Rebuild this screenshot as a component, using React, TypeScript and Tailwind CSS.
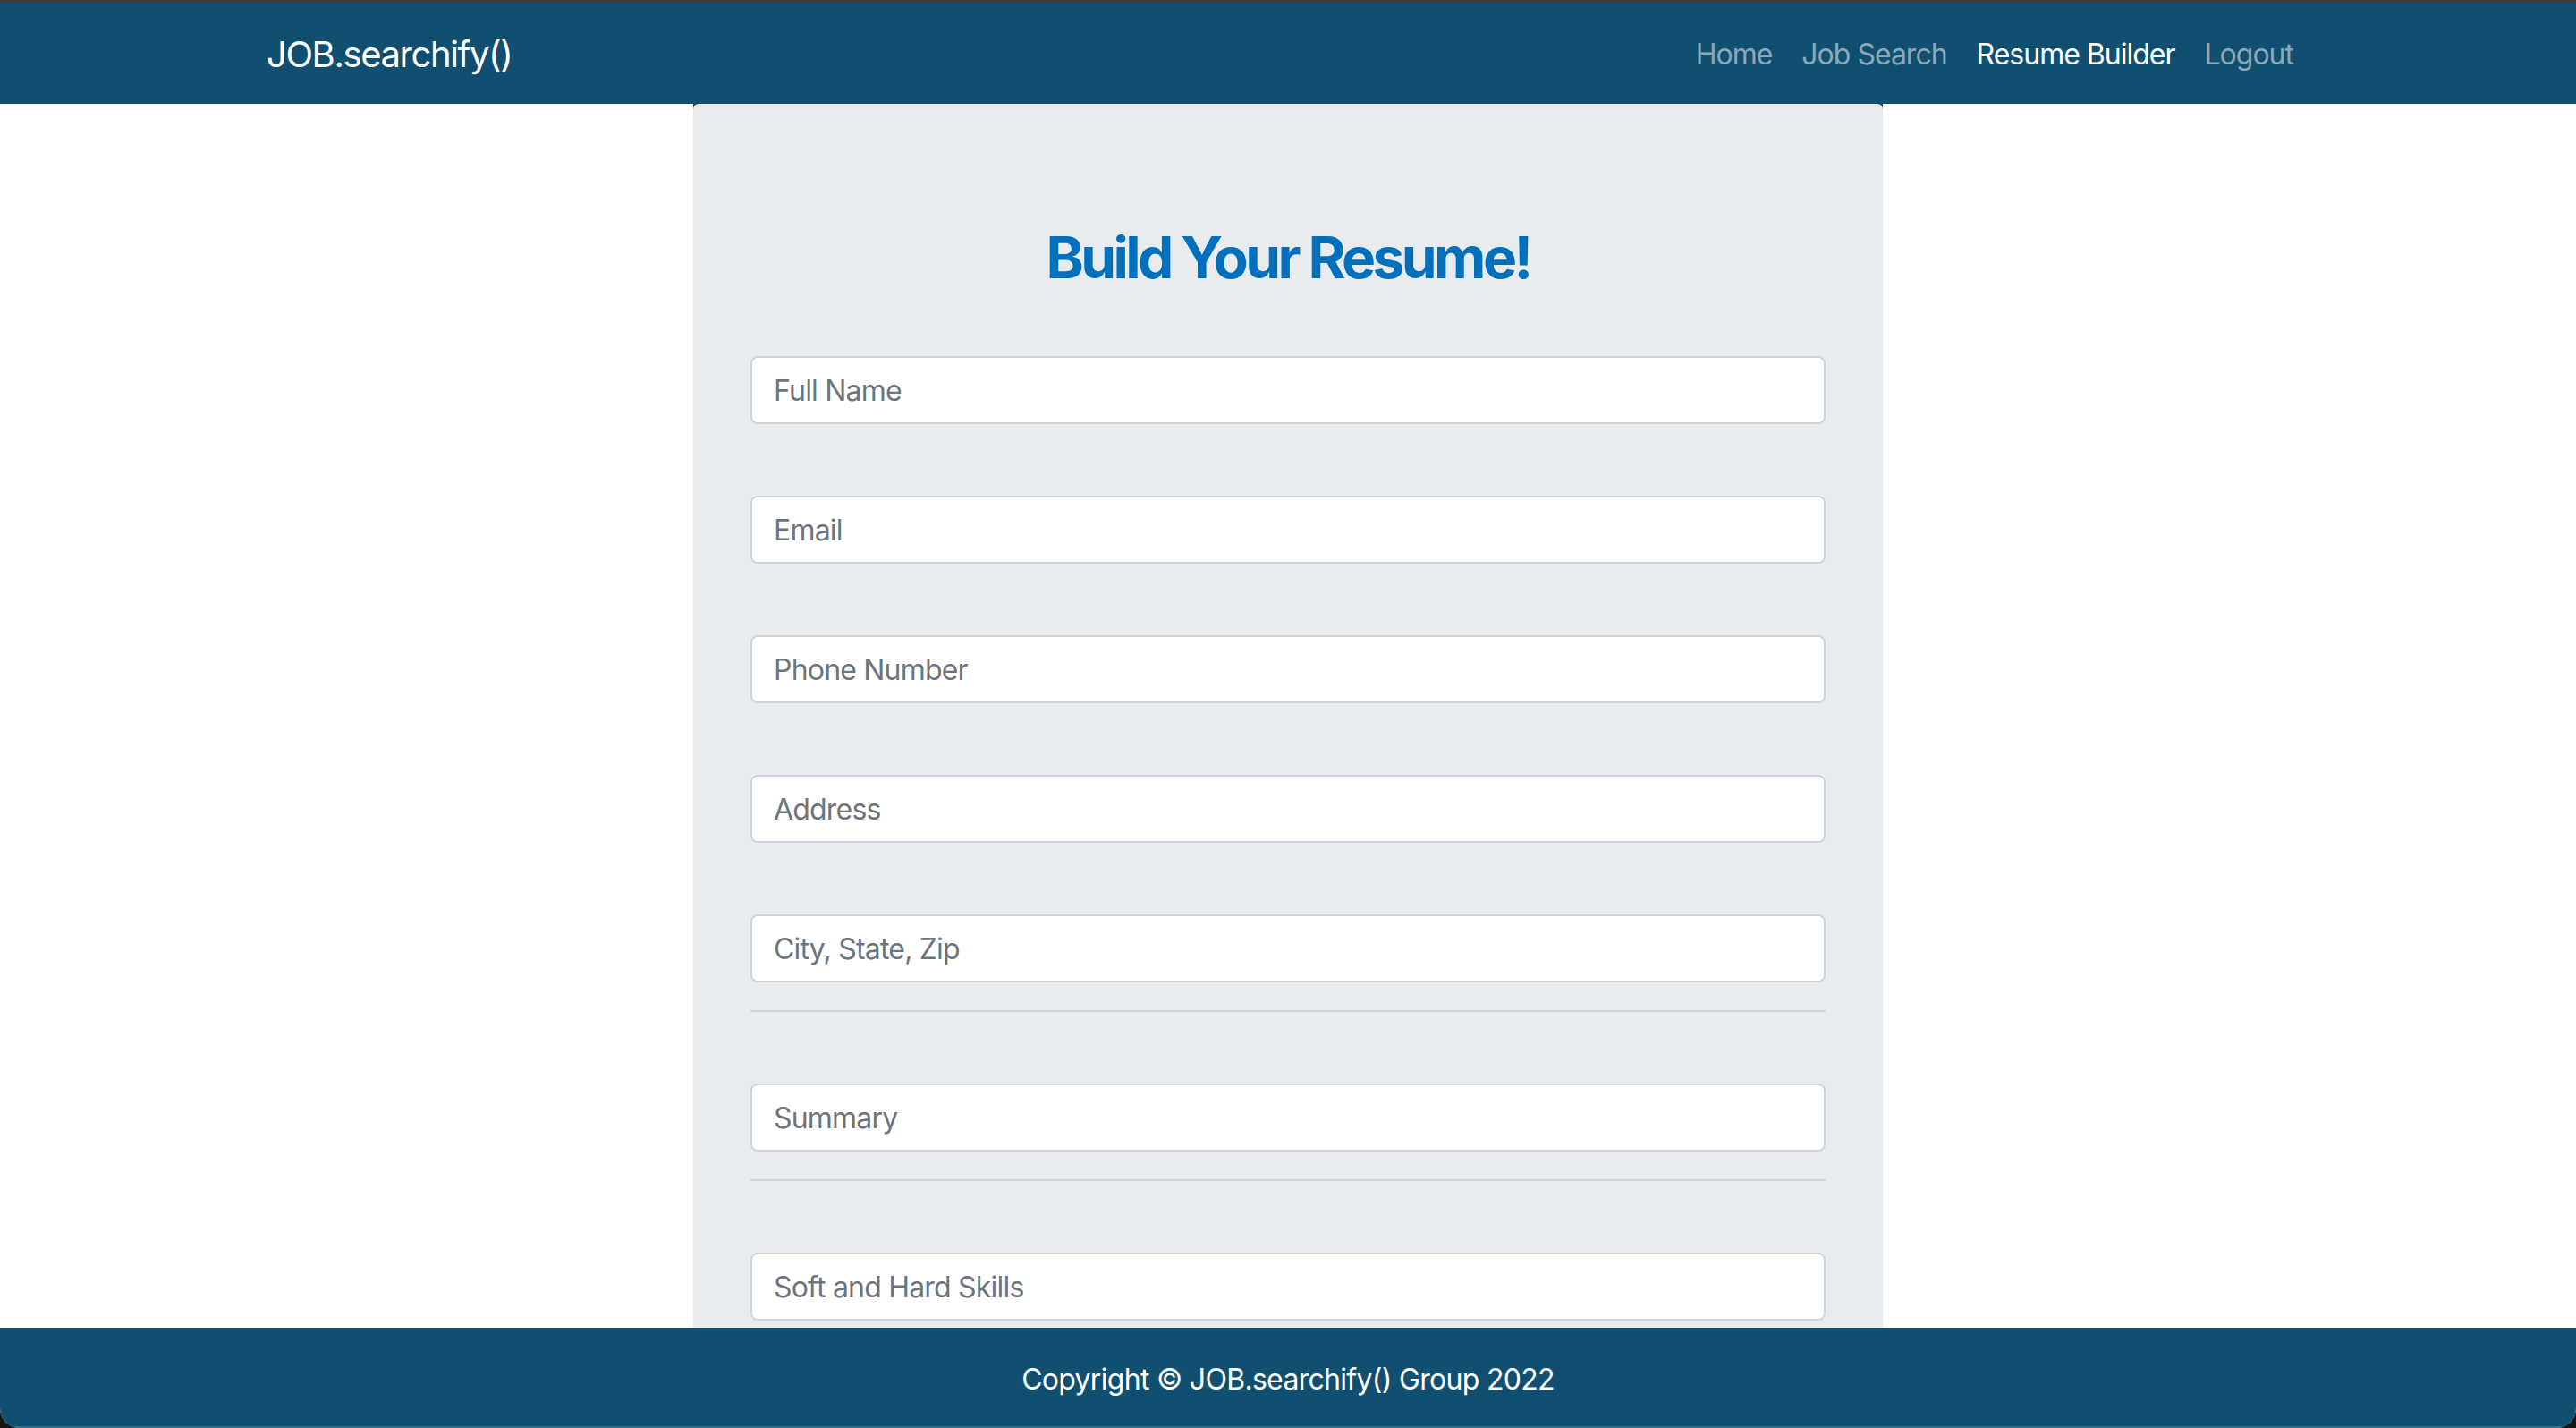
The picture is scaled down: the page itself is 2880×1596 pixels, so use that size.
const links = [
  { label: "Home", active: false },
  { label: "Job Search", active: false },
  { label: "Resume Builder", active: true },
  { label: "Logout", active: false },
];

function Field({ placeholder, className = "" }: { placeholder: string; className?: string }) {
  return (
    <input
      type="text"
      placeholder={placeholder}
      className={`block w-full h-[76px] rounded-[8px] border-2 border-[#ced4da] bg-white px-[24px] text-[32px] tracking-[-0.8px] text-[#212529] placeholder:text-[#6c757d] outline-none ${className}`}
    />
  );
}

export default function App() {
  return (
    <div className="h-[1596px] w-[2880px] bg-[#161616] font-['Inter',sans-serif]">
      <div className="flex h-full flex-col overflow-hidden rounded-b-[22px] border-t-[3px] border-[#3d3d3d] bg-white">
        {/* navbar */}
        <nav className="flex h-[113px] shrink-0 items-center justify-between bg-[#114f71] pl-[298px] pr-[316px]">
          <a className="pt-[3px] text-[40px] leading-none tracking-[-1.4px] text-white">JOB.searchify()</a>
          <ul className="flex items-center gap-[33px] pt-[2px]">
            {links.map((l) => (
              <li
                key={l.label}
                className={`text-[32px] leading-none tracking-[-1px] ${l.active ? "text-white" : "text-[#8ba7b8]"}`}
              >
                {l.label}
              </li>
            ))}
          </ul>
        </nav>

        {/* form area */}
        <main className="flex-1 overflow-hidden">
          <div className="mx-auto w-[1330px] bg-[#114f71]">
            <div className="rounded-t-[6px] bg-[#e9ecef] px-[64px] pt-[133px] pb-[120px]">
              <h2 className="mb-[72px] text-center text-[64px] font-bold leading-[77px] tracking-[-3.6px] text-[#0070bd]">
                Build Your Resume!
              </h2>
              <form className="flex flex-col">
                <Field placeholder="Full Name" className="mb-[80px]" />
                <Field placeholder="Email" className="mb-[80px]" />
                <Field placeholder="Phone Number" className="mb-[80px]" />
                <Field placeholder="Address" className="mb-[80px]" />
                <Field placeholder="City, State, Zip" className="mb-[31px]" />
                <hr className="mb-[80px] border-t-2 border-[#d1d6db]" />
                <Field placeholder="Summary" className="mb-[31px]" />
                <hr className="mb-[80px] border-t-2 border-[#d1d6db]" />
                <Field placeholder="Soft and Hard Skills" className="mb-[80px]" />
                <Field placeholder="Work Experience" className="mb-[80px]" />
              </form>
            </div>
          </div>
        </main>

        {/* footer */}
        <footer className="flex h-[112px] shrink-0 items-center justify-center border-b-2 border-[#3e6a84] bg-[#114f71] pt-[5px]">
          <p className="text-[32px] leading-none tracking-[-0.7px] text-white">Copyright © JOB.searchify() Group 2022</p>
        </footer>
      </div>
    </div>
  );
}
